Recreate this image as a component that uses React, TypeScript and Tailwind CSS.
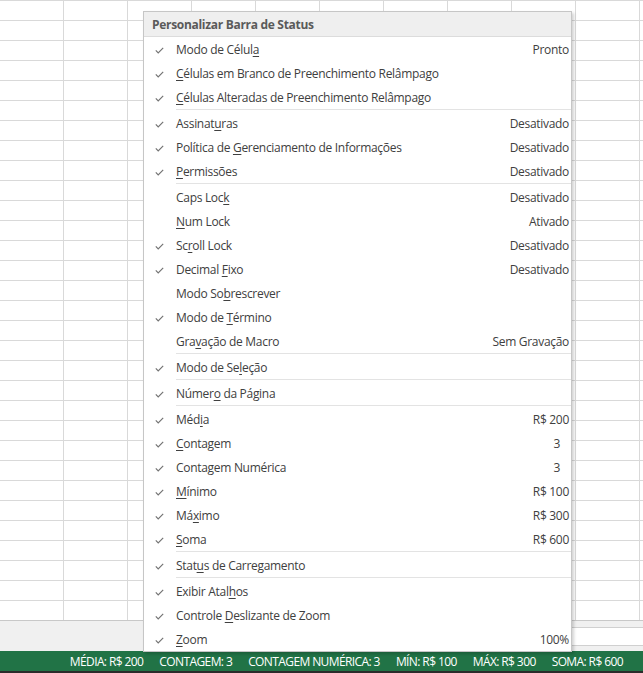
import React from "react";

type Row =
  | { sep: true }
  | { sep?: false; label: string; value?: string; checked: boolean; vpad?: boolean };

const items: Row[] = [
  { label: "Modo de Célul&a", value: "Pronto", checked: true },
  { label: "&Células em Branco de Preenchimento Relâmpago", checked: true },
  { label: "&Células Alteradas de Preenchimento Relâmpago", checked: true },
  { sep: true },
  { label: "Assinat&uras", value: "Desativado", checked: true },
  { label: "Política de &Gerenciamento de Informações", value: "Desativado", checked: true },
  { label: "&Permissões", value: "Desativado", checked: true },
  { sep: true },
  { label: "Caps Loc&k", value: "Desativado", checked: false },
  { label: "&Num Lock", value: "Ativado", checked: false },
  { label: "Sc&roll Lock", value: "Desativado", checked: true },
  { label: "Decimal &Fixo", value: "Desativado", checked: true },
  { label: "Modo So&brescrever", checked: false },
  { label: "Modo de &Término", checked: true },
  { label: "Gra&vação de Macro", value: "Sem Gravação", checked: false },
  { sep: true },
  { label: "Modo de Se&leção", checked: true },
  { sep: true },
  { label: "Númer&o da Página", checked: true },
  { sep: true },
  { label: "Méd&ia", value: "R$ 200", checked: true },
  { label: "&Contagem", value: "3", checked: true, vpad: true },
  { label: "Conta&gem Numérica", value: "3", checked: true, vpad: true },
  { label: "&Mínimo", value: "R$ 100", checked: true },
  { label: "Má&ximo", value: "R$ 300", checked: true },
  { label: "&Soma", value: "R$ 600", checked: true },
  { sep: true },
  { label: "Stat&us de Carregamento", checked: true },
  { sep: true },
  { label: "Exibir Atal&hos", checked: true },
  { label: "Controle &Deslizante de Zoom", checked: true },
  { label: "&Zoom", value: "100%", checked: true },
];

function Label({ text }: { text: string }) {
  const i = text.indexOf("&");
  if (i < 0) return <>{text}</>;
  return (
    <>
      {text.slice(0, i)}
      <span className="underline underline-offset-2">{text[i + 1]}</span>
      {text.slice(i + 2)}
    </>
  );
}

function Check() {
  return (
    <svg width="9" height="7" viewBox="0 0 9 7" className="block">
      <path d="M0.8 3.4 L3.2 5.8 L8.2 0.8" fill="none" stroke="#737373" strokeWidth="1.2" />
    </svg>
  );
}

const cols = Array.from({ length: 11 });
const rows = Array.from({ length: 31 });

export default function App() {
  return (
    <div className="relative w-[643px] h-[673px] overflow-hidden bg-white font-['Open_Sans',sans-serif]">
      {/* grid */}
      <div className="flex flex-col">
        {rows.map((_, r) => (
          <div key={r} className="flex h-[20px] border-t border-[#d9d9d9]">
            {cols.map((_, c) => (
              <div key={c} className="w-[64px] shrink-0 border-r border-[#d9d9d9]" />
            ))}
          </div>
        ))}
      </div>
      {/* sheet tab area */}
      <div className="h-[31px] border-t border-[#c8c8c8] bg-[#f0f0f0] flex justify-end items-start pt-[6px]">
        <div className="w-[80px] h-[19px] bg-white border-y border-l border-[#d0d0d0]" />
      </div>
      {/* status bar */}
      <div className="h-[20px] bg-[#217346] flex items-center justify-end gap-[16px] pr-[20px] pt-px text-white text-[12px] tracking-[-0.6px]">
        <span>MÉDIA: R$ 200</span>
        <span>CONTAGEM: 3</span>
        <span>CONTAGEM NUMÉRICA: 3</span>
        <span>MÍN: R$ 100</span>
        <span>MÁX: R$ 300</span>
        <span>SOMA: R$ 600</span>
      </div>
      <div className="h-[2px] bg-[#2b2b2b]" />

      {/* context menu */}
      <div className="absolute left-[143px] top-[11px] w-[429px] bg-white border border-[#c6c6c6] shadow-[2px_2px_3px_rgba(0,0,0,0.18)] text-[12px] text-[#404040] tracking-[-0.3px]">
        <div className="h-[25px] bg-[#efefef] border-b border-[#dcdcdc] pl-[8px] pt-[2px] flex items-center font-bold text-[#5a5a5a]">
          Personalizar Barra de Status
        </div>
        {items.map((it, idx) =>
          it.sep ? (
            <div key={idx} className="h-[2px] pl-[32px]">
              <div className="h-px bg-[#e3e3e3]" />
            </div>
          ) : (
            <div key={idx} className="h-[24px] flex items-center pt-[2px]">
              <div className="w-[32px] shrink-0 flex justify-start pl-[11px]">{it.checked && <Check />}</div>
              <div className="flex-1 whitespace-nowrap">
                <Label text={it.label} />
              </div>
              {it.value && (
                <div className={it.vpad ? "pr-[11px]" : "pr-[2px]"}>{it.value}</div>
              )}
            </div>
          )
        )}
      </div>
    </div>
  );
}
